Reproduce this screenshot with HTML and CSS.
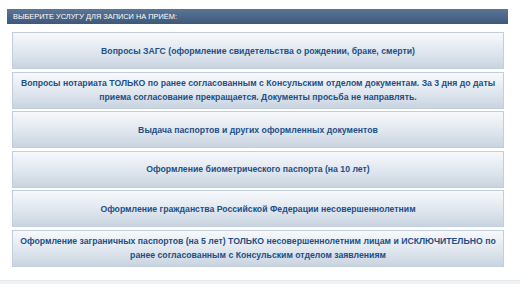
FILE: index.html
```html
<!DOCTYPE html>
<html lang="ru">
<head>
  <meta charset="UTF-8">
  <title>Запись на приём</title>
  <link rel="stylesheet" href="styles.css">
</head>
<body>
  <div class="page">
    <div class="caption">Выберите услугу для записи на приём:</div>
    <div class="services">
      <a class="service" href="#">Вопросы ЗАГС (оформление свидетельства о рождении, браке, смерти)</a>
      <a class="service" href="#">Вопросы нотариата ТОЛЬКО по ранее согласованным с Консульским отделом документам. За 3 дня до даты приема согласование прекращается. Документы просьба не направлять.</a>
      <a class="service" href="#">Выдача паспортов и других оформленных документов</a>
      <a class="service" href="#">Оформление биометрического паспорта (на 10 лет)</a>
      <a class="service" href="#">Оформление гражданства Российской Федерации несовершеннолетним</a>
      <a class="service" href="#">Оформление заграничных паспортов (на 5 лет) ТОЛЬКО несовершеннолетним лицам и ИСКЛЮЧИТЕЛЬНО по ранее согласованным с Консульским отделом заявлениям</a>
    </div>
  </div>
  <div class="footer"></div>
</body>
</html>
```

FILE: styles.css
```css
body { margin: 0; background: #fff; font-family: "Liberation Sans", Arial, sans-serif; }
.page { padding: 9px 12px 0 7px; height: 280px; box-sizing: border-box; }
.caption { height: 15px; line-height: 15px; padding-left: 6px; background: linear-gradient(#5a7595, #3d5878); color: #fff; font-size: 7.4px; text-transform: uppercase; }
.services { display: flex; flex-direction: column; gap: 2.5px; margin: 8px 4px 0 5px; }
.service { display: flex; align-items: center; justify-content: center; height: 35px; padding: 0 2px; border: 1px solid #c2cedb; background: linear-gradient(#f7f9fb, #dfe6ee 55%, #c9d4e1); color: #1d4f87; font-size: 8.7px; font-weight: bold; line-height: 14px; text-align: center; text-decoration: none; }
.footer { height: 4px; border-top: 1px solid #e6e8eb; background: #f1f2f4; }
```
